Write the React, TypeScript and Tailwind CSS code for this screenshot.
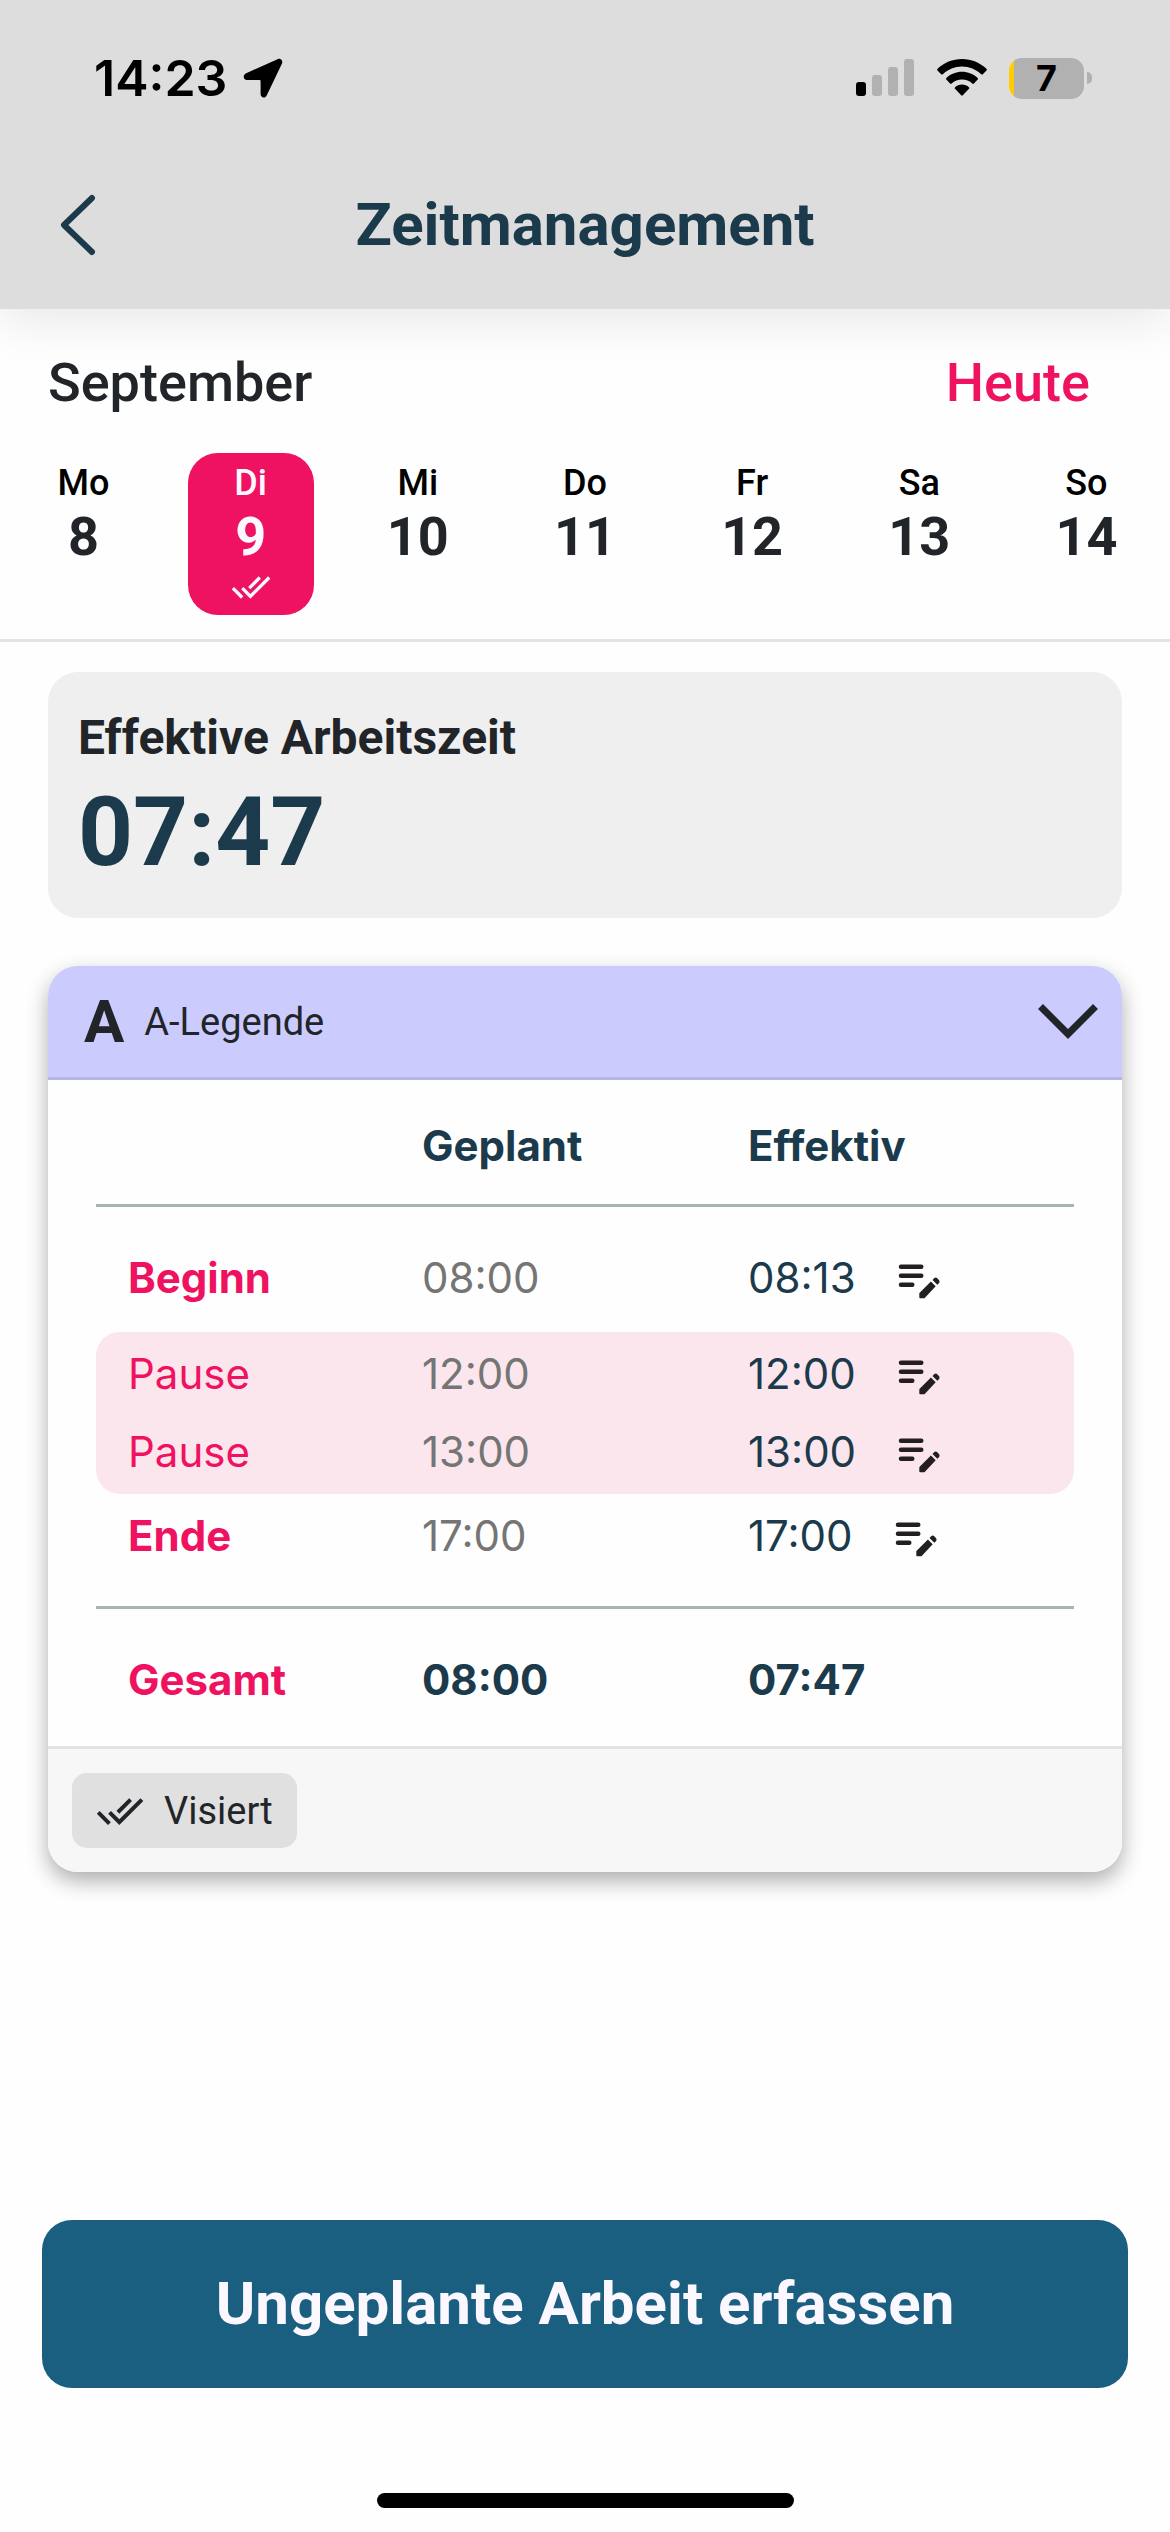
import React, { useState } from 'react';
import { MdDoneAll } from 'react-icons/md';


type Day = { name: string; date: number; approved?: boolean };

type TimeRow = { label: string; planned: string; effective: string };

const days: Day[] = [
    { name: "Mo", date: 8 },
    { name: "Di", date: 9, approved: true },
    { name: "Mi", date: 10 },
    { name: "Do", date: 11 },
    { name: "Fr", date: 12 },
    { name: "Sa", date: 13 },
    { name: "So", date: 14 },
];

const breaks: TimeRow[] = [
    { label: "Pause", planned: "12:00", effective: "12:00" },
    { label: "Pause", planned: "13:00", effective: "13:00" },
];


function StatusBar() {
    return (
        <div className="flex h-[156px] items-center justify-between pr-[78px] pl-[94px] font-[Inter,sans-serif]">
            <div className="flex items-center gap-4">
                <span className="text-[50px] leading-[60px] font-semibold text-black">14:23</span>
                <svg className="h-10 w-10" viewBox="0 0 40 40" fill="black">
                    <path d="M34.5 1.2 3.2 15.2C-.6 17 .2 22 4 22h12.2c1 0 1.4.4 1.4 1.4V36c0 4 4.6 4.8 6.2 1.2L39 5.6C40.2 2.6 37.6-.2 34.5 1.2z" />
                </svg>
            </div>
            <div className="flex items-center gap-[22px]">
                <svg className="h-[38px] w-[59px]" viewBox="0 0 59 38">
                    <rect x="0" y="23" width="10" height="14" rx="3" fill="#000" />
                    <rect x="16" y="16" width="10" height="21" rx="3" fill="#b1b1b1" />
                    <rect x="32" y="8" width="10" height="29" rx="3" fill="#b1b1b1" />
                    <rect x="48" y="0" width="10" height="37" rx="3" fill="#b1b1b1" />
                </svg>
                <svg className="h-[38px] w-[50px]" viewBox="0 0 50 38">
                    <path d="M25 0C15.5 0 7 3.7.6 9.7c-.6.6-.6 1.2-.1 1.7l3.7 3.8c.5.5 1.1.5 1.6 0C11 10.4 17.6 7.5 25 7.5s14 2.9 19.2 7.7c.5.5 1.1.5 1.6 0l3.7-3.8c.5-.5.5-1.1-.1-1.7C43 3.7 34.5 0 25 0z" />
                    <path d="M25 12.8c-6 0-11.5 2.3-15.6 6.1-.6.5-.6 1.2-.1 1.7l3.8 3.9c.5.5 1.1.5 1.6 0 2.7-2.5 6.3-4 10.3-4s7.6 1.5 10.3 4c.5.5 1.1.5 1.6 0l3.8-3.9c.5-.5.5-1.2-.1-1.7-4.1-3.8-9.6-6.1-15.6-6.1z" />
                    <path d="M25 25.5c-2.7 0-5.1 1-6.9 2.7-.6.5-.6 1.1-.1 1.6l6.2 6.5c.5.5 1.1.5 1.6 0l6.2-6.5c.5-.5.5-1.1-.1-1.6-1.8-1.7-4.2-2.7-6.9-2.7z" />
                </svg>
                <div className="flex items-center gap-[3px]">
                    <div className="flex h-[41px] w-[75px] items-center justify-center rounded-[13px] bg-linear-to-r from-[#ffcc00] from-[5px] to-[#b1b1b1] to-[5px]">
                        <span className="text-[36px] leading-[48px] font-bold text-black">7</span>
                    </div>
                    <div className="h-3 w-[5px] rounded-r-full bg-[#b1b1b1]"></div>
                </div>
            </div>
        </div>
    );
}

function EditButton() {
    return (
        <button aria-label="Bearbeiten" className="block">
            <svg className="h-[54px] w-[54px]" viewBox="0 0 24 24" fill="#231f20">
                <rect x="3" y="6" width="11" height="2" rx="1" />
                <rect x="3" y="10" width="11" height="2" rx="1" />
                <rect x="3" y="14" width="7" height="2" rx="1" />
                <path d="m18.01 12.87.71-.71a.996.996 0 0 1 1.41 0l.71.71c.39.39.39 1.02 0 1.41l-.71.71-2.12-2.12zm-.71.71-5.01 5.01c-.1.1-.15.22-.15.35v1.56c0 .28.22.5.5.5h1.56c.13 0 .26-.05.35-.15L19.42 15.7l-2.12-2.12z" />
            </svg>
        </button>
    );
}

function EffectiveTime({ time }: { time: string }) {
    return (
        <div className="flex items-center gap-9 text-[#1b3a4b]">
            <span>{time}</span>
            <EditButton />
        </div>
    );
}


export default function App() {
    const [selected, setSelected] = useState(9);
    const [open, setOpen] = useState(true);

    return (
        <div className="flex min-h-screen flex-col bg-[#fefefe] font-[Roboto,sans-serif] text-[#212529]">
            <header className="bg-[#dddddd] shadow-[0_12px_45px_rgba(0,0,0,0.09)]">
                <StatusBar />
                <div className="grid h-[153px] grid-cols-[1fr_auto_1fr] items-center pb-4">
                    <button aria-label="Zurück" className="ml-[60px] justify-self-start">
                        <svg className="h-[62px] w-9" viewBox="0 0 36 62" fill="none" stroke="#1b3a4b" strokeWidth="6" strokeLinecap="round" strokeLinejoin="round">
                            <path d="M32 4 4 31l28 27" />
                        </svg>
                    </button>
                    <h1 className="text-[60px] leading-[72px] font-bold text-[#1b3a4b]">Zeitmanagement</h1>
                </div>
            </header>

            <section className="border-b-[3px] border-[#e3e3e3] pt-[42px] pb-6">
                <div className="flex items-center justify-between pr-20 pl-12 text-[54px] leading-[64px] font-medium">
                    <h2>September</h2>
                    <button className="text-[#ee1260]" onClick={() => setSelected(9)}>Heute</button>
                </div>
                <div className="mt-[38px] grid grid-cols-7 justify-items-center">
                    {
                        days.map((day) => {
                            const active = day.date === selected;
                            return (
                                <button
                                    key={day.date}
                                    onClick={() => setSelected(day.date)}
                                    className={active
                                        ? "flex h-[162px] w-[126px] flex-col items-center rounded-[30px] bg-[#ee1260] pt-[6px] text-[#faf7ff]"
                                        : "flex h-[162px] w-[126px] flex-col items-center rounded-[30px] pt-[6px]"}
                                >
                                    <span className={active ? "text-[36px] leading-[48px] font-medium" : "text-[36px] leading-[48px] font-medium text-black"}>{day.name}</span>
                                    <span className="text-[54px] leading-[60px] font-bold">{day.date}</span>
                                    {day.approved && <MdDoneAll className="h-10 w-11" />}
                                </button>
                            );
                        })
                    }
                </div>
            </section>

            <main className="flex flex-col gap-12 px-12 pt-[30px] pb-12">
                <section className="rounded-[30px] bg-[#efefef] px-[30px] pt-[34px] pb-6">
                    <h3 className="text-[48px] leading-[64px] font-bold">Effektive Arbeitszeit</h3>
                    <p className="text-[96px] leading-[124px] font-bold text-[#1b3a4b]">07:47</p>
                </section>

                <section className="overflow-hidden rounded-[30px] bg-[#fefefe] shadow-[0_9px_21px_rgba(0,0,0,0.32)]">
                    <button
                        aria-expanded={open}
                        onClick={() => setOpen(!open)}
                        className="flex h-[114px] w-full items-center border-b-[3px] border-[#b6b6e3] bg-[#cbcbfe] pr-6 pl-9"
                    >
                        <span className="text-[60px] leading-[72px] font-bold">A</span>
                        <span className="ml-5 text-[38px] leading-[48px]">A-Legende</span>
                        <svg className="ml-auto h-[35px] w-[60px]" viewBox="0 0 60 35" fill="none" stroke="#212529" strokeWidth="7">
                            <path d="M2.5 2.5 30 30 57.5 2.5" />
                        </svg>
                    </button>

                    <div className="px-12 pt-2">
                        <table className="w-full table-fixed border-separate border-spacing-0 text-left font-[Inter,sans-serif] text-[42px] leading-[54px]">
                            <thead>
                                <tr className="h-[119px] text-[#1b3a4b]">
                                    <td className="border-b-[3px] border-[#a9b4b6]"></td>
                                    <th scope="col" className="border-b-[3px] border-[#a9b4b6] font-bold">Geplant</th>
                                    <th scope="col" className="border-b-[3px] border-[#a9b4b6] font-bold">Effektiv</th>
                                </tr>
                            </thead>
                            <tbody>
                                <tr className="h-[125px]">
                                    <th scope="row" className="pt-4 pl-8 font-bold text-[#ee1260]">Beginn</th>
                                    <td className="pt-4 text-[#757575]">08:00</td>
                                    <td className="pt-4"><EffectiveTime time="08:13" /></td>
                                </tr>
                                {
                                    breaks.map((row, index) => {
                                        return (
                                            <tr key={index} className={index === 0 ? "h-[81px] *:pt-[3px]" : "h-[81px] *:pb-[3px]"}>
                                                <th scope="row" className={index === 0
                                                    ? "rounded-tl-[24px] bg-[#fbe6ed] pl-8 font-normal text-[#ee1260]"
                                                    : "rounded-bl-[24px] bg-[#fbe6ed] pl-8 font-normal text-[#ee1260]"}>{row.label}</th>
                                                <td className="bg-[#fbe6ed] text-[#757575]">{row.planned}</td>
                                                <td className={index === 0 ? "rounded-tr-[24px] bg-[#fbe6ed]" : "rounded-br-[24px] bg-[#fbe6ed]"}>
                                                    <EffectiveTime time={row.effective} />
                                                </td>
                                            </tr>
                                        );
                                    })
                                }
                                <tr className="h-[115px]">
                                    <th scope="row" className="border-b-[3px] border-[#a9b4b6] pb-7 pl-8 font-bold text-[#ee1260]">Ende</th>
                                    <td className="border-b-[3px] border-[#a9b4b6] pb-7 text-[#757575]">17:00</td>
                                    <td className="border-b-[3px] border-[#a9b4b6] pb-7"><EffectiveTime time="17:00" /></td>
                                </tr>
                            </tbody>
                            <tfoot>
                                <tr className="h-[137px] font-bold text-[#1b3a4b]">
                                    <th scope="row" className="pt-1 pl-8 text-[#ee1260]">Gesamt</th>
                                    <td className="pt-1">08:00</td>
                                    <td className="pt-1">07:47</td>
                                </tr>
                            </tfoot>
                        </table>
                    </div>

                    <div className="flex border-t-[3px] border-[#e3e3e3] bg-[#f7f7f7] p-6">
                        <button className="flex h-[75px] items-center gap-5 rounded-[15px] bg-[#e0e0e0] px-6 text-[38px] leading-[48px]">
                            <MdDoneAll className="h-12 w-12" />
                            Visiert
                        </button>
                    </div>
                </section>
            </main>

            <footer className="mt-auto flex flex-col items-center px-[42px] pb-6">
                <button className="h-[168px] w-full rounded-[30px] bg-[#1a5e80] text-[60px] leading-[72px] font-bold text-[#faf7ff]">
                    Ungeplante Arbeit erfassen
                </button>
                <div className="mt-[105px] h-[15px] w-[417px] rounded-full bg-black"></div>
            </footer>
        </div>
    );
}
